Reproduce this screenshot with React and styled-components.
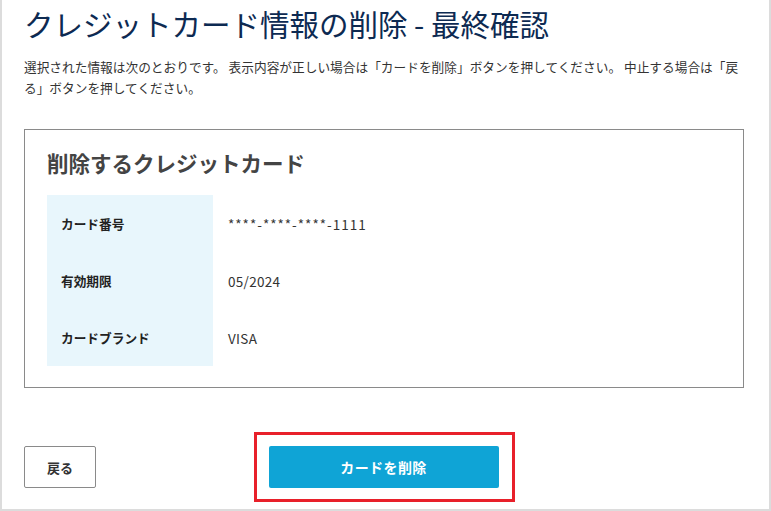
import React from "react";
import styled, { createGlobalStyle } from "styled-components";

const GlobalStyle = createGlobalStyle`
  html, body { margin: 0; padding: 0; background: #fff; }
  body { font-family: "Noto Sans CJK JP", "Noto Sans", sans-serif; color: #333; }
  * { box-sizing: border-box; }
`;

const Frame = styled.div`
  width: 771px;
  height: 511px;
  border-left: 2px solid #dcdcdc;
  border-right: 2px solid #dcdcdc;
  border-bottom: 2px solid #dcdcdc;
  padding: 0 25px 0 22px;
  display: flex;
  flex-direction: column;
`;

const Title = styled.h1`
  margin: 3px 0 0;
  font-size: 29.5px;
  line-height: 40px;
  font-weight: 400;
  color: #0d2a52;
`;

const Lead = styled.p`
  margin: 13px -4px 0 0;
  font-size: 12.7px;
  line-height: 21px;
  color: #333;
`;

const Panel = styled.section`
  margin-top: 31px;
  border: 1px solid #8a8a8a;
  padding: 18px 22px 21px;
`;

const PanelTitle = styled.h2`
  margin: 0 0 17px;
  font-size: 21.5px;
  line-height: 30px;
  font-weight: 700;
  color: #444;
`;

const InfoTable = styled.div`
  display: grid;
  grid-template-columns: 166px 1fr;
  grid-auto-rows: 57px;
`;

const Label = styled.div`
  background: #e8f6fc;
  display: flex;
  align-items: center;
  padding-left: 14px;
  font-size: 12.7px;
  font-weight: 700;
  color: #222;
`;

const Value = styled.div`
  display: flex;
  align-items: center;
  padding-left: 15px;
  font-size: 13.5px;
  letter-spacing: ${(p) => (p.$masked ? "1px" : "0.3px")};
  color: #333;
`;

const Actions = styled.div`
  margin-top: 44px;
  display: grid;
  grid-template-columns: 1fr auto 1fr;
  align-items: center;
`;

const BackButton = styled.button`
  justify-self: start;
  width: 72px;
  height: 42px;
  border: 1px solid #8a8a8a;
  border-radius: 2px;
  background: #fff;
  font-family: inherit;
  font-size: 13px;
  font-weight: 700;
  color: #333;
  cursor: pointer;
`;

const Highlight = styled.div`
  border: 3px solid #e8202a;
  padding: 11px 13px 11px 12px;
`;

const PrimaryButton = styled.button`
  display: block;
  width: 230px;
  height: 42px;
  border: none;
  border-radius: 2px;
  background: #0fa4d6;
  font-family: inherit;
  font-size: 14px;
  letter-spacing: 0.4px;
  font-weight: 700;
  color: #fff;
  cursor: pointer;
`;

const rows = [
  { label: "カード番号", value: "****-****-****-1111", masked: true },
  { label: "有効期限", value: "05/2024" },
  { label: "カードブランド", value: "VISA" },
];

export default function App() {
  return (
    <>
      <GlobalStyle />
      <Frame>
        <Title>クレジットカード情報の削除 - 最終確認</Title>
        <Lead>
          選択された情報は次のとおりです。 表示内容が正しい場合は「カードを削除」ボタンを押してください。 中止する場合は「戻る」ボタンを押してください。
        </Lead>
        <Panel>
          <PanelTitle>削除するクレジットカード</PanelTitle>
          <InfoTable>
            {rows.map((r) => (
              <React.Fragment key={r.label}>
                <Label>{r.label}</Label>
                <Value $masked={r.masked}>{r.value}</Value>
              </React.Fragment>
            ))}
          </InfoTable>
        </Panel>
        <Actions>
          <BackButton>戻る</BackButton>
          <Highlight>
            <PrimaryButton>カードを削除</PrimaryButton>
          </Highlight>
          <div />
        </Actions>
      </Frame>
    </>
  );
}
